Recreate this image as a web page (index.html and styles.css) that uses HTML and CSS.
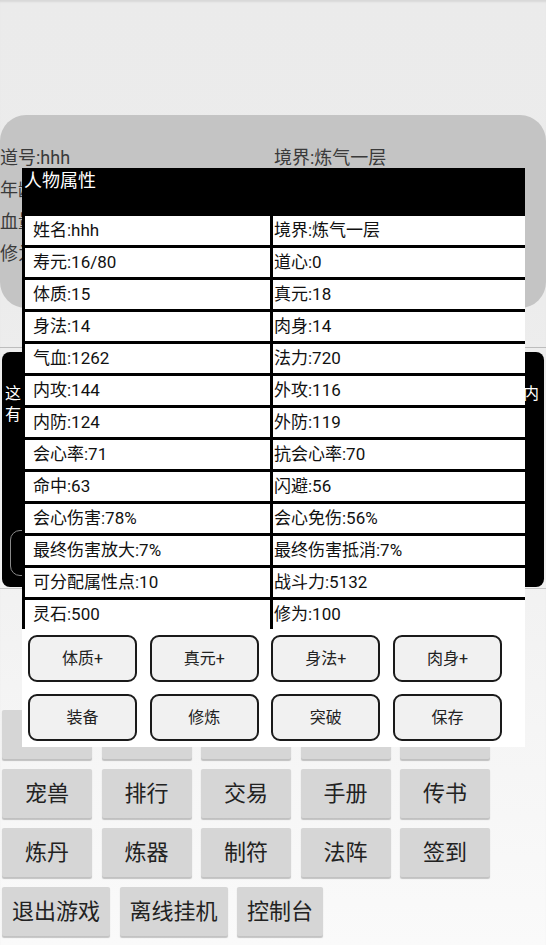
FILE: index.html
```html
<!DOCTYPE html>
<html lang="zh-CN">
<head>
<meta charset="utf-8">
<title>人物属性</title>
<link rel="stylesheet" href="styles.css">
</head>
<body>
<div class="app">
  <div class="top-space"></div>

  <div class="card">
    <div class="card-cell">道号:hhh</div><div class="card-cell">境界:炼气一层</div>
    <div class="card-cell">年龄</div><div class="card-cell"></div>
    <div class="card-cell">血量</div><div class="card-cell"></div>
    <div class="card-cell">修为</div><div class="card-cell"></div>
  </div>

  <div class="panel-wrap">
    <div class="panel">
      <div class="panel-line"><span>这</span><span>内</span></div>
      <div class="panel-line"><span>有</span></div>
      <div class="panel-box"></div>
    </div>
  </div>

  <div class="menu">
    <div class="menu-row">
      <div class="gbtn"></div><div class="gbtn"></div><div class="gbtn"></div><div class="gbtn"></div><div class="gbtn"></div>
    </div>
    <div class="menu-row">
      <div class="gbtn">宠兽</div><div class="gbtn">排行</div><div class="gbtn">交易</div><div class="gbtn">手册</div><div class="gbtn">传书</div>
    </div>
    <div class="menu-row">
      <div class="gbtn">炼丹</div><div class="gbtn">炼器</div><div class="gbtn">制符</div><div class="gbtn">法阵</div><div class="gbtn">签到</div>
    </div>
    <div class="menu-row">
      <div class="gbtn wide">退出游戏</div><div class="gbtn wide">离线挂机</div><div class="gbtn narrow">控制台</div>
    </div>
  </div>

  <div class="dialog">
    <div class="dialog-title">人物属性</div>
    <div class="stats">
      <div class="row"><div class="lc">姓名:hhh</div><div class="rc">境界:炼气一层</div></div>
      <div class="row"><div class="lc">寿元:16/80</div><div class="rc">道心:0</div></div>
      <div class="row"><div class="lc">体质:15</div><div class="rc">真元:18</div></div>
      <div class="row"><div class="lc">身法:14</div><div class="rc">肉身:14</div></div>
      <div class="row"><div class="lc">气血:1262</div><div class="rc">法力:720</div></div>
      <div class="row"><div class="lc">内攻:144</div><div class="rc">外攻:116</div></div>
      <div class="row"><div class="lc">内防:124</div><div class="rc">外防:119</div></div>
      <div class="row"><div class="lc">会心率:71</div><div class="rc">抗会心率:70</div></div>
      <div class="row"><div class="lc">命中:63</div><div class="rc">闪避:56</div></div>
      <div class="row"><div class="lc">会心伤害:78%</div><div class="rc">会心免伤:56%</div></div>
      <div class="row"><div class="lc">最终伤害放大:7%</div><div class="rc">最终伤害抵消:7%</div></div>
      <div class="row"><div class="lc">可分配属性点:10</div><div class="rc">战斗力:5132</div></div>
      <div class="row last"><div class="lc">灵石:500</div><div class="rc">修为:100</div></div>
    </div>
    <div class="actions">
      <div class="dbtn">体质+</div><div class="dbtn">真元+</div><div class="dbtn">身法+</div><div class="dbtn">肉身+</div>
      <div class="dbtn">装备</div><div class="dbtn">修炼</div><div class="dbtn">突破</div><div class="dbtn">保存</div>
    </div>
  </div>
</div>
</body>
</html>
```

FILE: styles.css
```css
html, body {
  margin: 0;
  padding: 0;
}

body {
  font-family: Roboto, "Noto Sans CJK SC", sans-serif;
  width: 546px;
  height: 945px;
  overflow: hidden;
}

.app {
  position: relative;
  width: 546px;
  height: 945px;
  overflow: hidden;
  background: linear-gradient(to bottom, #ebebeb 0px, #ececec 300px, #f2f2f2 600px, #fafafa 945px);
  box-shadow: inset 0 3px 2px -1px #d8d8d8;
}

.top-space {
  height: 115px;
}

/* grey info card */
.card {
  height: 193px;
  box-sizing: border-box;
  background: #c4c4c4;
  border-radius: 26px;
  padding-top: 27px;
  display: grid;
  grid-template-columns: 274px 1fr;
  grid-auto-rows: 32px;
  font-size: 18px;
  line-height: 32px;
  color: #3a3a3a;
}

.card-cell {
  white-space: nowrap;
}

/* black story panel */
.panel-wrap {
  margin-top: 39px;
  border-top: 1px solid #bdbdbd;
  border-bottom: 1px solid #c8c8c8;
  padding: 4px 2px 1px 2px;
}

.panel {
  height: 235px;
  box-sizing: border-box;
  background: #000;
  border-radius: 8px;
  padding: 32px 5px 0 3px;
  color: #fff;
  font-size: 16px;
  line-height: 20.5px;
}

.panel-line {
  display: flex;
  justify-content: space-between;
  height: 20.5px;
}

.panel-box {
  margin-top: 105px;
  margin-left: 5px;
  width: 260px;
  height: 46px;
  box-sizing: border-box;
  border: 1.5px solid #8a8a8a;
  border-radius: 10px;
}

/* bottom menu grid */
.menu {
  margin-top: 121px;
  padding-left: 2px;
  display: flex;
  flex-direction: column;
  gap: 10px;
}

.menu-row {
  display: flex;
  gap: 9.5px;
}

.gbtn {
  width: 90px;
  height: 49px;
  box-sizing: border-box;
  background: #d6d6d6;
  border-radius: 2px;
  box-shadow: 0 1.5px 1px rgba(0, 0, 0, 0.22);
  font-size: 22px;
  line-height: 49px;
  text-align: center;
  color: #222;
  white-space: nowrap;
}

.gbtn.wide {
  width: 108px;
}

.gbtn.narrow {
  width: 86px;
}

/* attribute dialog overlay */
.dialog {
  position: absolute;
  top: 168px;
  left: 22px;
  width: 503px;
  height: 579px;
  background: #fff;
}

.dialog-title {
  height: 48px;
  box-sizing: border-box;
  background: #000;
  color: #fff;
  font-size: 18px;
  line-height: 26px;
  padding-left: 2px;
}

.stats {
  display: flex;
  flex-direction: column;
}

.row {
  display: grid;
  grid-template-columns: 251px 1fr;
  height: 32px;
  box-sizing: border-box;
  border-bottom: 3px solid #000;
  font-size: 17px;
  line-height: 29px;
  color: #111;
}

.row.last {
  height: 29px;
  border-bottom: none;
}

.lc {
  border-left: 3px solid #000;
  border-right: 3px solid #000;
  padding-left: 8px;
  white-space: nowrap;
}

.rc {
  padding-left: 1px;
  white-space: nowrap;
}

.actions {
  padding: 6px 0 0 6px;
  display: grid;
  grid-template-columns: repeat(4, 109px);
  column-gap: 12.7px;
  row-gap: 12px;
}

.dbtn {
  height: 47px;
  box-sizing: border-box;
  border: 2px solid #1a1a1a;
  border-radius: 9px;
  background: #f1f1f1;
  font-size: 16px;
  line-height: 43px;
  text-align: center;
  color: #222;
}
```
